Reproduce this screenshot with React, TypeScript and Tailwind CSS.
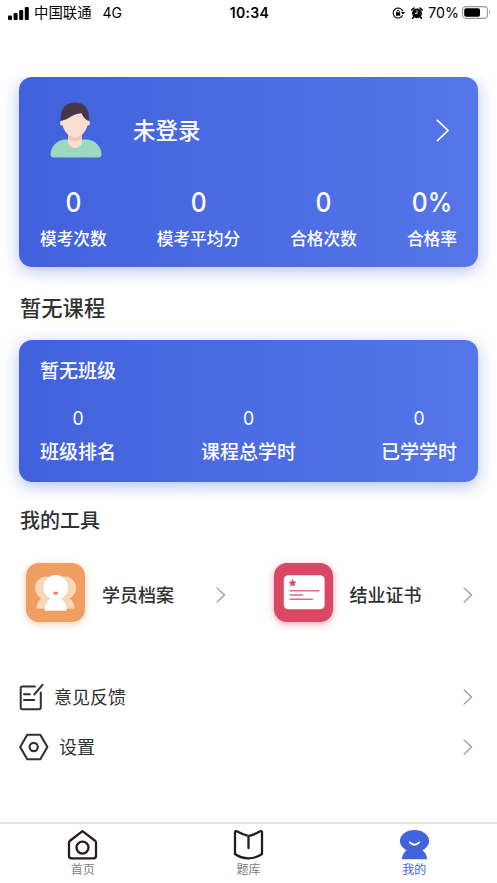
type Stat = { value: string; label: string };

const examStats: Stat[] = [
  { value: '0', label: '模考次数' },
  { value: '0', label: '模考平均分' },
  { value: '0', label: '合格次数' },
  { value: '0%', label: '合格率' },
];

const classStats: Stat[] = [
  { value: '0', label: '班级排名' },
  { value: '0', label: '课程总学时' },
  { value: '0', label: '已学学时' },
];

function Chevron({ className }: { className: string }) {
  return (
    <svg className={className} viewBox="0 0 10 16" fill="none" stroke="currentColor" strokeLinecap="round">
      <path d="M1 .8 L8.6 8 L1 15.2" />
    </svg>
  );
}

function StatusBar() {
  return (
    <header className="grid h-[26px] grid-cols-3 items-center pl-2 pr-[6px] text-[14px] leading-none text-black">
      <div className="flex items-center">
        <svg className="h-[13px] w-[21px]" viewBox="0 0 21 13">
          <rect x="0" y="8.5" width="4" height="4.5" rx="1" />
          <rect x="5.6" y="6" width="4" height="7" rx="1" />
          <rect x="11.2" y="3" width="4" height="10" rx="1" />
          <rect x="16.8" y="0" width="4" height="13" rx="1" />
        </svg>
        <span className="ml-[5px] text-[14.4px]">中国联通</span>
        <span className="ml-[11px]">4G</span>
      </div>
      <div className="text-center text-[14px] font-semibold tracking-[0.3px]">10:34</div>
      <div className="flex items-center justify-end">
        <svg className="h-3 w-[13px]" viewBox="0 0 13 12" fill="none" stroke="black" strokeWidth="1.1">
          <path d="M10.6 8.3 A5 5 0 1 1 10.8 4.2" />
          <path d="M9 5 h4 l-2 2.6z" fill="black" stroke="none" />
          <rect x="4" y="5.3" width="4.2" height="3.4" fill="black" stroke="none" />
          <path d="M4.9 5.5 V4.4 a1.2 1.2 0 0 1 2.4 0 V5.5" strokeWidth=".9" />
        </svg>
        <svg className="ml-[6px] h-3 w-3" viewBox="0 0 12 12">
          <circle cx="6" cy="6.3" r="4.9" />
          <path d="M.8 3 L3 1 M9 1 L11.2 3 M2.6 10 L1.6 11.2 M9.4 10 l1 1.2" stroke="black" strokeWidth="1.6" strokeLinecap="round" />
          <path d="M6 3.4 V6.5 H3.8" fill="none" stroke="white" strokeWidth=".9" />
        </svg>
        <span className="ml-[5px] text-[14.2px]">70%</span>
        <svg className="ml-[3px] h-[13px] w-[29px]" viewBox="0 0 29 13">
          <rect x=".6" y=".6" width="24.8" height="11.8" rx="3.4" fill="none" stroke="#999" strokeWidth="1.1" />
          <rect x="2.2" y="2.2" width="15.8" height="8.6" rx="1.8" />
          <path d="M27 4.4 q2 2.1 0 4.2z" fill="#999" />
        </svg>
      </div>
    </header>
  );
}

function Avatar() {
  return (
    <svg className="h-14 w-[52px]" viewBox="0 0 52 56">
      <path d="M16 37.5 H36 C45 37.5 51.5 45 51.5 52.5 Q51.5 55.5 48.5 55.5 H3.5 Q.5 55.5 .5 52.5 C.5 45 7 37.5 16 37.5z" fill="#9bd8bf" />
      <path d="M18 31 H32 V39 a7 7 0 0 1 -14 0z" fill="#f8dfd0" />
      <path d="M18 32 h14 v5.2 q-7 3.4 -14 0z" fill="#f0c8b2" />
      <ellipse cx="12" cy="21" rx="2" ry="2.6" fill="#f8dfd0" />
      <ellipse cx="38" cy="21" rx="2" ry="2.6" fill="#f8dfd0" />
      <path d="M12 19 L31 9 L38.2 19 C38 27 32 35.5 25 35.5 C18 35.5 12 27 12 19z" fill="#f8dfd0" />
      <path d="M10.5 18.5 C10 7 15 .5 25 .5 C35 .5 40 7 38.8 18.5 H37.5 C34.5 16.5 32 13.5 31.5 11.2 C21 11.5 20 18 10.5 18.5z" fill="#483847" />
    </svg>
  );
}

function ArchiveIcon() {
  return (
    <svg className="h-[59px] w-[59px]" viewBox="0 0 59 59">
      <g fill="#f9d6b4">
        <circle cx="20.5" cy="25" r="11.5" />
        <circle cx="38.5" cy="25" r="11.5" />
        <path d="M10.5 45.7 Q10.5 38 17 34.5 H42 Q48.5 38 48.5 45.7z" />
      </g>
      <path d="M18.8 47.7 Q18.8 38.5 25 35.8 A12.4 12.4 0 1 1 34.5 35.8 Q40.6 38.5 40.6 47.7z" fill="white" />
      <path d="M27 28.8 h5.2 q-.4 3.2 -2.6 3.2 t-2.6 -3.2z" fill="#e98c5c" />
    </svg>
  );
}

function CertificateIcon() {
  return (
    <svg className="h-[59px] w-[59px]" viewBox="0 0 59 59">
      <rect x="9.8" y="12.3" width="40.8" height="34" rx="4.5" fill="white" />
      <path d="M18.6 16 l1.2 2.5 2.7 .4 -2 1.9 .5 2.8 -2.4 -1.3 -2.4 1.3 .5 -2.8 -2 -1.9 2.7 -.4z" fill="#dc4863" />
      <path d="M16.2 27.8 H45 M16.2 32 H28.6 M16.2 36.3 H38.4" stroke="#df6b82" strokeWidth="1.6" strokeLinecap="round" />
    </svg>
  );
}

export default function App() {
  return (
    <div className="flex h-[883px] w-[497px] flex-col overflow-hidden bg-white font-['Inter','Noto_Sans_CJK_SC',sans-serif] text-[#303133]">
      <StatusBar />

      <main className="flex-1 pt-[51px]">
        {/* the shadow stops at the card's top edge */}
        <section className="ml-[19px] mr-[19.5px] h-[189.5px] rounded-[13px] bg-linear-to-r from-[#4262dd] to-[#5575e9] pl-[21px] pr-[20.5px] text-white shadow-[0_4px_16px_rgba(66,98,221,0.4)] [clip-path:inset(0_-30px_-30px_-30px)]">
          <div className="flex h-[106px] items-center pl-[10px] pr-[7px]">
            <Avatar />
            <h1 className="ml-[31px] flex-1 pt-[2px] text-[22.5px] font-medium leading-none">未登录</h1>
            <Chevron className="h-[23px] w-[14px] stroke-[1.2]" />
          </div>
          <div className="flex justify-between">
            {examStats.map((s) => (
              <div key={s.label} className="text-center">
                <div className="h-[37px] scale-x-[0.93] text-[26.5px] font-medium leading-[38px]">{s.value}</div>
                <div className="mt-[7px] text-[16.7px] font-medium leading-6">{s.label}</div>
              </div>
            ))}
          </div>
        </section>

        <h2 className="ml-5 mt-[26px] text-[21.3px] font-medium leading-[30px]">暂无课程</h2>

        <section className="ml-[19px] mr-[19.5px] mt-[17px] h-[142.5px] rounded-[13px] bg-linear-to-r from-[#4262dd] to-[#5575e9] pl-[21px] pr-[20.5px] pt-[17px] text-white shadow-[0_4px_16px_rgba(66,98,221,0.4)]">
          <h3 className="text-[19px] font-medium leading-[29px]">暂无班级</h3>
          <div className="mt-[19px] flex justify-between">
            {classStats.map((s) => (
              <div key={s.label} className="text-center">
                <div className="h-7 scale-x-[0.93] text-[19px] leading-7">{s.value}</div>
                <div className="mt-[6px] text-[19px] font-medium leading-7">{s.label}</div>
              </div>
            ))}
          </div>
        </section>

        <h2 className="ml-5 mt-[24px] text-[20px] font-medium leading-[30px]">我的工具</h2>

        <div className="mt-[27px] flex text-[18px] font-medium">
          <div className="flex w-[247.5px] items-center pl-[26px] pr-[22px]">
            <div className="rounded-[13px] bg-[#ef9d61] shadow-[0_2px_7px_rgba(239,130,80,0.4)]">
              <ArchiveIcon />
            </div>
            <span className="ml-[17px] flex-1 pt-[5px]">学员档案</span>
            <Chevron className="mt-[4px] h-4 w-[10px] stroke-[1.15] text-[#909399]" />
          </div>
          <div className="flex w-[247.5px] items-center pl-[26px] pr-[22px]">
            <div className="rounded-[13px] bg-[#dc4863] shadow-[0_2px_7px_rgba(220,72,99,0.5)]">
              <CertificateIcon />
            </div>
            <span className="ml-[17px] flex-1 pt-[5px]">结业证书</span>
            <Chevron className="mt-[4px] h-4 w-[10px] stroke-[1.15] text-[#909399]" />
          </div>
        </div>

        <div className="mt-[50px] pl-[19px] pr-[24px] text-[18px]">
          <div className="flex h-[50px] items-center">
            <svg className="h-[28px] w-[25px]" viewBox="0 0 25 28" fill="none" stroke="#303133" strokeWidth="2" strokeLinecap="round">
              <path d="M16 3.5 H3.5 Q1.7 3.5 1.7 5.3 V24.3 Q1.7 26.2 3.5 26.2 H20 Q21.8 26.2 21.8 24.3 V9.5" />
              <path d="M15.3 11.5 L23.5 1.8 M5 11.3 H10.8 M5 17 H15.2" />
            </svg>
            <span className="ml-[10px] flex-1">意见反馈</span>
            <Chevron className="h-4 w-[10px] stroke-[1.15] text-[#909399]" />
          </div>
          <div className="flex h-[50px] items-center">
            <svg className="h-[28px] w-[30px]" viewBox="0 0 30 28" fill="none" stroke="#303133" strokeWidth="2.1" strokeLinejoin="round">
              <path d="M8.2 1.8 H21.3 L28.4 14 L21.3 26.3 H8.2 L1.2 14z" />
              <circle cx="14.7" cy="14" r="4.1" />
            </svg>
            <span className="ml-[10px] flex-1">设置</span>
            <Chevron className="h-4 w-[10px] stroke-[1.15] text-[#909399]" />
          </div>
        </div>
      </main>

      <nav className="grid h-[61px] grid-cols-3 border-t-2 border-[#e2e2e2] text-[12px] leading-4 text-[#808084]">
        <div className="flex flex-col items-center pt-[5px]">
          <svg className="h-[31px] w-[31px]" viewBox="0 0 31 31" fill="none" stroke="#251c1c" strokeWidth="2.3" strokeLinejoin="round">
            <path d="M15.5 2.2 L28.3 12 Q29 12.6 29 13.5 V26.7 Q29 29.3 26.4 29.3 H4.6 Q2 29.3 2 26.7 V13.5 Q2 12.6 2.7 12z" />
            <circle cx="15.5" cy="18.6" r="6" />
          </svg>
          <span className="mt-[2px]">首页</span>
        </div>
        <div className="flex flex-col items-center pt-[5px]">
          <svg className="h-[31px] w-[31px]" viewBox="0 0 31 31" fill="none" stroke="#251c1c" strokeWidth="2.3" strokeLinecap="round" strokeLinejoin="round">
            <path d="M15.5 7 Q9.5 5.5 3.8 2.3 Q2 1.5 2 3.5 V25 Q8 29.3 15.5 29.3 Q23 29.3 29 25 V3.5 Q29 1.5 27.2 2.3 Q21.5 5.5 15.5 7 V19" />
          </svg>
          <span className="mt-[2px]">题库</span>
        </div>
        <div className="flex flex-col items-center pt-[5px] text-[#4163dc]">
          <svg className="h-[31px] w-[31px]" viewBox="0 0 31 31" fill="currentColor">
            <ellipse cx="15.5" cy="12" rx="14.6" ry="11" />
            <path d="M3 30 Q3.5 23 9.5 20 H21.5 Q27.5 23 28 30 Q28 30.3 27.5 30.3 H3.5 Q3 30.3 3 30z" />
            <path d="M10.8 13.3 Q15.5 18 20.2 13.3" fill="none" stroke="white" strokeWidth="1.9" strokeLinecap="round" />
          </svg>
          <span className="mt-[2px]">我的</span>
        </div>
      </nav>
    </div>
  );
}
